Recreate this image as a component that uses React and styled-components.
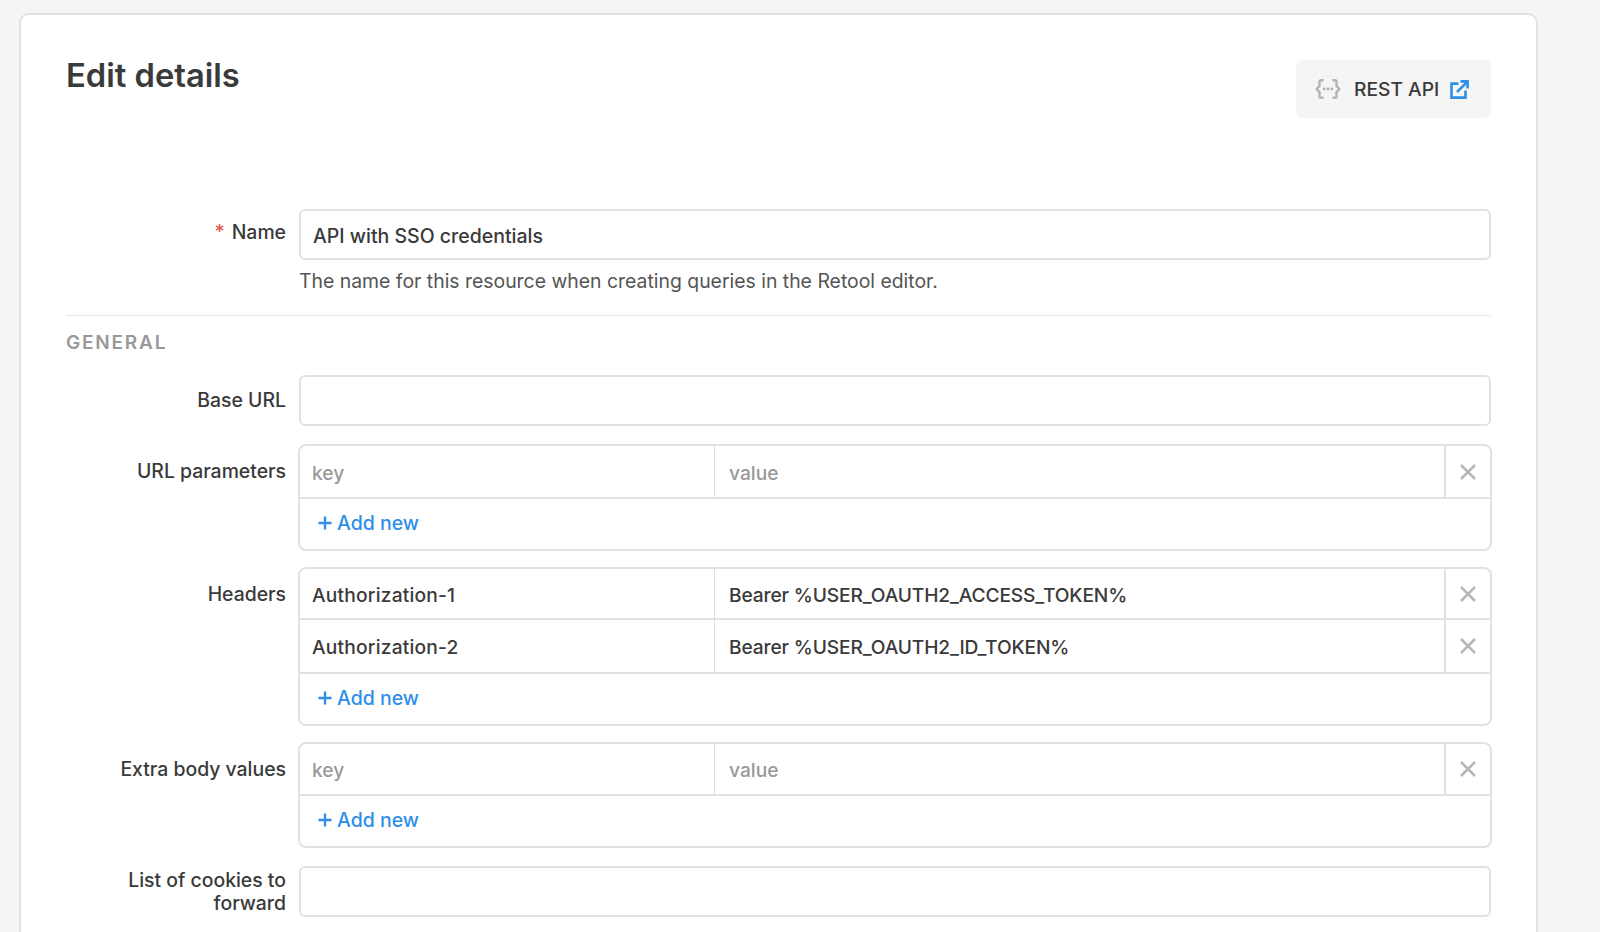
import React from "react";
import styled, { createGlobalStyle } from "styled-components";

const Global = createGlobalStyle`
  html, body { margin: 0; padding: 0; height: 932px; overflow: hidden; background: #f5f5f5; }
  body { font-family: Inter, "Liberation Sans", sans-serif; color: #3a3a3a; }
  * { box-sizing: border-box; }
`;

const Page = styled.div`
  padding: 13px 62px 0 19px;
  height: 932px;
  overflow: hidden;
`;

const Card = styled.section`
  background: #fff;
  border: 2px solid #e2e2e2;
  border-radius: 10px;
  padding: 45px 45px 60px;
  min-height: 1000px;
`;

const Header = styled.header`
  display: flex;
  justify-content: space-between;
  align-items: flex-start;
  margin-bottom: 91px;
`;

const Title = styled.h1`
  margin: 0;
  font-size: 32.7px;
  line-height: 30px;
  font-weight: 600;
  color: #3a3a3a;
`;

const TypeBadge = styled.a`
  display: flex;
  align-items: center;
  width: 195px;
  height: 58px;
  padding: 0 19px;
  background: #f5f5f5;
  border-radius: 6px;
  font-size: 19.2px;
  font-weight: 500;
  color: #3a3a3a;
`;

const BadgeName = styled.span`
  margin: 0 11px 0 13px;
  white-space: nowrap;
`;

const Row = styled.div`
  display: grid;
  grid-template-columns: 220px 1fr;
  column-gap: 13px;
  margin-top: ${(p) => p.$gap ?? 18}px;
`;

const Label = styled.label`
  padding-top: ${(p) => p.$top ?? 14}px;
  text-align: right;
  font-size: 19.4px;
  font-weight: 500;
  line-height: 22.5px;
  color: #3a3a3a;
`;

const Required = styled.span`
  color: #e5574e;
  margin-right: 7px;
`;

const TextInput = styled.input`
  display: block;
  width: 100%;
  height: 51px;
  padding: 2px 12px 0;
  border: 2px solid #e2e2e2;
  border-radius: 6px;
  background: #fff;
  font: 500 19.5px Inter, "Liberation Sans", sans-serif;
  color: #3a3a3a;
  outline: none;
`;

const Help = styled.p`
  margin: 9px 0 0;
  font-size: 19.4px;
  line-height: 24px;
  color: #555;
`;

const Divider = styled.hr`
  margin: 22px 0 0;
  border: 0;
  height: 1px;
  background: #e6e6e6;
`;

const SectionTitle = styled.h2`
  margin: 15px 0 0;
  font-size: 19px;
  line-height: 24px;
  font-weight: 600;
  letter-spacing: 1.8px;
  color: #999;
`;

const KeyValueTable = styled.div`
  margin: 0 -1px;
  border: 2px solid #e2e2e2;
  border-radius: 8px;
`;

const KeyValueRow = styled.div`
  display: grid;
  grid-template-columns: 414px 1fr 46px;
  height: ${(p) => p.$height}px;
  border-bottom: 2px solid #e2e2e2;
`;

const Cell = styled.input`
  min-width: 0;
  height: 100%;
  padding: ${(p) => (p.$first ? "2px 12px 0" : "2px 13px 0 14px")};
  border: 0;
  border-left: ${(p) => (p.$first ? "0" : "1px solid #dedede")};
  background: transparent;
  font: 500 19.2px Inter, "Liberation Sans", sans-serif;
  letter-spacing: ${(p) => (p.$first ? "0.2px" : "-0.14px")};
  color: #3a3a3a;
  outline: none;
  &::placeholder { color: #999; opacity: 1; letter-spacing: 0; }
`;

const RemoveCell = styled.button`
  display: flex;
  align-items: center;
  justify-content: center;
  padding: 0;
  border: 0;
  border-left: 2px solid #e2e2e2;
  background: transparent;
`;

const AddRow = styled.div`
  display: flex;
  align-items: center;
  height: 50px;
  padding: 0 0 2px 18px;
  font-size: 19.5px;
  font-weight: 500;
  color: #2f8fe6;
`;

const Plus = styled.svg`
  width: 14px;
  height: 14px;
  margin-right: 5px;
`;

function CloseIcon() {
  return (
    <svg width="16" height="16" viewBox="0 0 16 16" fill="none" stroke="#b6b6b6" strokeWidth="2.5">
      <path d="M1 1l14 14M15 1L1 15" />
    </svg>
  );
}

function BracesIcon() {
  return (
    <svg width="26" height="20" viewBox="0 0 26 20" fill="none" stroke="#b2b2b2" strokeWidth="2.4" style={{ flex: "none" }}>
      <path d="M8.5 1.2H6a1.5 1.5 0 0 0-1.5 1.5V7L1.6 10l2.9 3v4.3A1.5 1.5 0 0 0 6 18.8h2.5" />
      <path d="M17.5 1.2H20a1.5 1.5 0 0 1 1.5 1.5V7l2.9 3-2.9 3v4.3a1.5 1.5 0 0 1-1.5 1.5h-2.5" />
      <circle cx="9.2" cy="10" r="1.4" fill="#b2b2b2" stroke="none" />
      <circle cx="13" cy="10" r="1.4" fill="#b2b2b2" stroke="none" />
      <circle cx="16.8" cy="10" r="1.4" fill="#b2b2b2" stroke="none" />
    </svg>
  );
}

function ExternalIcon() {
  return (
    <svg width="19" height="19" viewBox="0 0 19 19" fill="none" stroke="#2f8fe6" strokeWidth="2.6" style={{ flex: "none" }}>
      <path d="M8.5 3.6H1.5v14h14V10.5" />
      <path d="M7 12L17.2 1.8M10.5 1.4h7.1v7.1" />
    </svg>
  );
}

function AddNew() {
  return (
    <AddRow>
      <Plus viewBox="0 0 14 14" fill="none" stroke="#2f8fe6" strokeWidth="2.4">
        <path d="M7 0.5v13M0.5 7h13" />
      </Plus>
      Add new
    </AddRow>
  );
}

function Pairs({ rows }) {
  return (
    <KeyValueTable>
      {rows.map((r, i) => (
        <KeyValueRow key={i} $height={r.height}>
          <Cell $first readOnly defaultValue={r.k} placeholder="key" />
          <Cell readOnly defaultValue={r.v} placeholder="value" />
          <RemoveCell aria-label="Remove">
            <CloseIcon />
          </RemoveCell>
        </KeyValueRow>
      ))}
      <AddNew />
    </KeyValueTable>
  );
}

export default function App() {
  return (
    <>
      <Global />
      <Page>
        <Card>
          <Header>
            <Title>Edit details</Title>
            <TypeBadge>
              <BracesIcon />
              <BadgeName>REST API</BadgeName>
              <ExternalIcon />
            </TypeBadge>
          </Header>

          <Row $gap={0}>
            <Label $top={12}>
              <Required>*</Required>Name
            </Label>
            <TextInput readOnly defaultValue="API with SSO credentials" />
          </Row>
          <Row $gap={0}>
            <span />
            <Help>The name for this resource when creating queries in the Retool editor.</Help>
          </Row>
          <Divider />
          <SectionTitle>GENERAL</SectionTitle>

          <Row $gap={20}>
            <Label $top={14}>Base URL</Label>
            <TextInput readOnly />
          </Row>
          <Row $gap={18}>
            <Label $top={16}>URL parameters</Label>
            <Pairs rows={[{ k: "", v: "", height: 53 }]} />
          </Row>
          <Row $gap={16}>
            <Label $top={16}>Headers</Label>
            <Pairs
              rows={[
                { k: "Authorization-1", v: "Bearer %USER_OAUTH2_ACCESS_TOKEN%", height: 51 },
                { k: "Authorization-2", v: "Bearer %USER_OAUTH2_ID_TOKEN%", height: 54 },
              ]}
            />
          </Row>
          <Row $gap={16}>
            <Label $top={16}>Extra body values</Label>
            <Pairs rows={[{ k: "", v: "", height: 52 }]} />
          </Row>
          <Row $gap={18}>
            <Label $top={3}>List of cookies to forward</Label>
            <TextInput readOnly />
          </Row>
        </Card>
      </Page>
    </>
  );
}
